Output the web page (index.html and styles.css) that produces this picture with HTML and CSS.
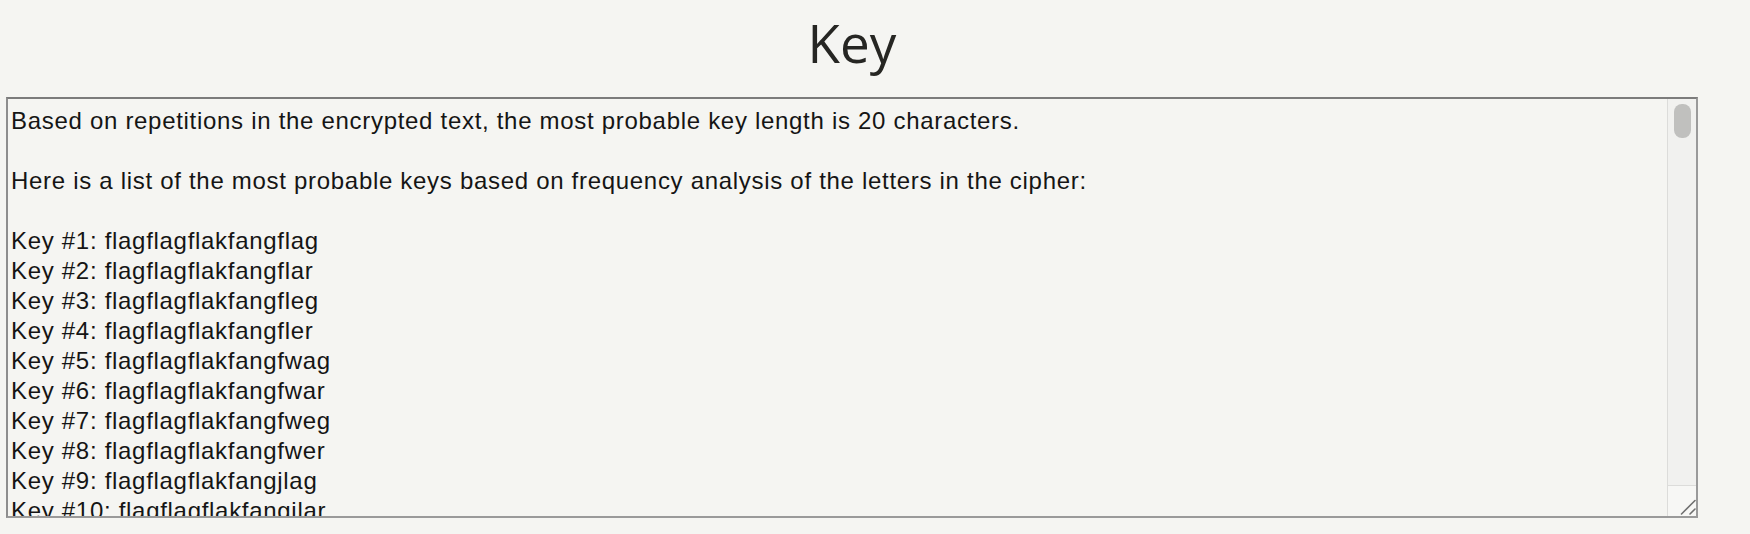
FILE: index.html
```html
<!DOCTYPE html>
<html lang="en">
<head>
<meta charset="utf-8">
<title>Key</title>
<link rel="stylesheet" href="styles.css">
</head>
<body>
<main class="page">
<h1 class="title">Key</h1>
<div class="box">
<textarea class="output" spellcheck="false">Based on repetitions in the encrypted text, the most probable key length is 20 characters.

Here is a list of the most probable keys based on frequency analysis of the letters in the cipher:

Key #1: flagflagflakfangflag
Key #2: flagflagflakfangflar
Key #3: flagflagflakfangfleg
Key #4: flagflagflakfangfler
Key #5: flagflagflakfangfwag
Key #6: flagflagflakfangfwar
Key #7: flagflagflakfangfweg
Key #8: flagflagflakfangfwer
Key #9: flagflagflakfangjlag
Key #10: flagflagflakfangjlar
Key #11: flagflagflakfangjleg
Key #12: flagflagflakfangjler
Key #13: flagflagflakfangjwag
Key #14: flagflagflakfangjwar
Key #15: flagflagflakfangjweg
Key #16: flagflagflakfangjwer
Key #17: flagflagflakfanjflag
Key #18: flagflagflakfanjflar
Key #19: flagflagflakfanjfleg
Key #20: flagflagflakfanjfler
Key #21: flagflagflakfanjfwag
Key #22: flagflagflakfanjfwar
Key #23: flagflagflakfanjfweg
Key #24: flagflagflakfanjfwer
Key #25: flagflagflakfanjjlag
Key #26: flagflagflakfanjjlar
Key #27: flagflagflakfanjjleg
Key #28: flagflagflakfanjjler
Key #29: flagflagflakfanjjwag
Key #30: flagflagflakfanjjwar
Key #31: flagflagflakfanjjweg
Key #32: flagflagflakfanjjwer
Key #33: flagflagflakfawgflag
Key #34: flagflagflakfawgflar
Key #35: flagflagflakfawgfleg
Key #36: flagflagflakfawgfler
Key #37: flagflagflakfawgfwag
Key #38: flagflagflakfawgfwar
Key #39: flagflagflakfawgfweg
Key #40: flagflagflakfawgfwer</textarea>
<div class="scrollbar" aria-hidden="true">
<div class="track"><div class="thumb"></div></div>
<div class="resizer">
<svg width="26" height="29" viewBox="0 0 26 29"><path d="M11.5 27 L25 13.5 M20 27 L25 22" stroke="#6f6f6f" stroke-width="1.6" stroke-linecap="round" fill="none"/></svg>
</div>
</div>
</div>
</main>
</body>
</html>
```

FILE: styles.css
```css
html, body {
  margin: 0;
  padding: 0;
  background: #f5f5f2;
}

.page {
  width: 1692px;
  margin-left: 6px;
  display: flex;
  flex-direction: column;
}

.title {
  margin: 0;
  height: 97px;
  display: flex;
  align-items: center;
  justify-content: center;
  font-family: "Open Sans", "Liberation Sans", sans-serif;
  font-weight: 400;
  font-size: 53px;
  color: #262623;
  padding-bottom: 12px;
  box-sizing: border-box;
}

.box {
  box-sizing: border-box;
  width: 1692px;
  height: 421px;
  display: flex;
  border: 2px solid #9a9a9a;
  border-top-color: #7c7c7c;
  border-left-color: #8e8e8e;
}

.output {
  flex: 1;
  min-width: 0;
  box-sizing: border-box;
  height: 100%;
  margin: 0;
  padding: 7px 3px 0;
  border: none;
  background: transparent;
  color: #151515;
  font-family: "Liberation Sans", Arial, sans-serif;
  font-size: 24px;
  letter-spacing: 0.7px;
  line-height: 30px;
  outline: none;
  resize: none;
  overflow: hidden;
  white-space: pre-wrap;
}

.scrollbar {
  width: 28px;
  flex: none;
  display: flex;
  flex-direction: column;
  border-left: 1px solid #dcdcda;
  background: #f1f1ef;
}

.track {
  flex: 1;
  padding: 5px 5px 0 6px;
}

.thumb {
  height: 34px;
  border-radius: 8px;
  background: #c0c0be;
}

.resizer {
  height: 30px;
  border-top: 1px solid #dcdcda;
  background: #f7f7f5;
  display: flex;
  align-items: flex-end;
  justify-content: flex-end;
}

.resizer svg {
  display: block;
}
```
